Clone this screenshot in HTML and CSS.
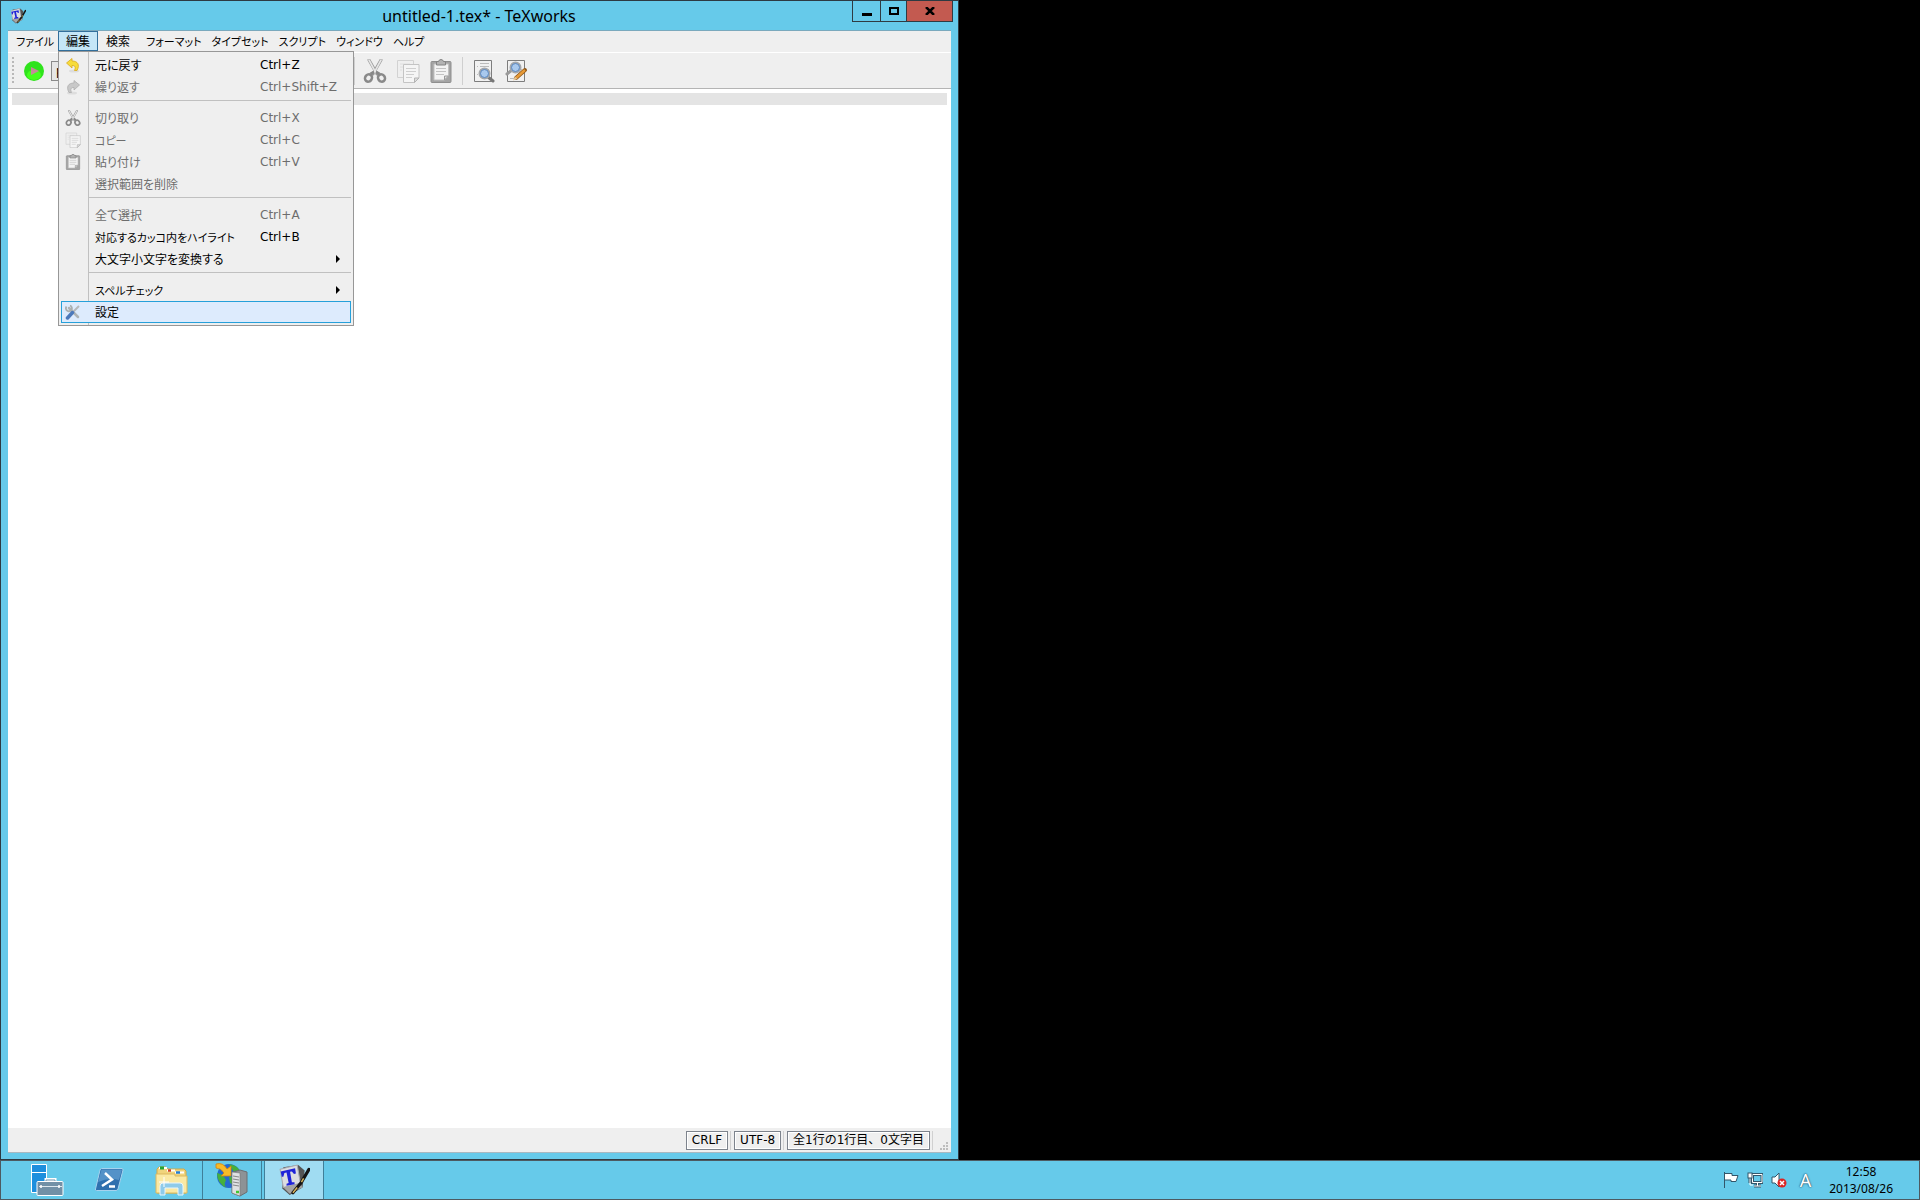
FILE: index.html
```html
<!DOCTYPE html>
<html lang="ja">
<head>
    <meta charset="UTF-8">
    <title>untitled-1.tex* - TeXworks</title>
    <link rel="stylesheet" href="styles.css">
</head>
<body>

    <!-- icons that are used more than once -->
    <svg class="defs" width="0" height="0">
        <symbol id="cut" viewBox="0 0 24 24">
            <path d="M6 1 L14 15 M18 1 L10 15" stroke="#9a9a9a" stroke-width="3" stroke-linecap="round"/>
            <path d="M6 1 L13 14 M18 1 L11 14" stroke="#e6e6e6" stroke-width="1.6" stroke-linecap="round"/>
            <path d="M11 13 L7.500 15 M13 13 L16.500 15" stroke="#888" stroke-width="3"/>
            <ellipse cx="5.500" cy="19" rx="3.300" ry="3.800" fill="none" stroke="#898989" stroke-width="2.600" transform="rotate(35 5.500 19)"/>
            <ellipse cx="18.500" cy="19" rx="3.300" ry="3.800" fill="none" stroke="#898989" stroke-width="2.600" transform="rotate(-35 18.500 19)"/>
        </symbol>
        <symbol id="copy" viewBox="0 0 24 24">
            <path d="M1.500 1.500 H17.500 V18.500 H1.500 Z" fill="#efefef" stroke="#d2d2d2"/>
            <path d="M4 5 H14 M4 8 H8 M4 11 H6" stroke="#dedede"/>
            <path d="M7.500 5.500 H23 V19 L18.500 23.500 H7.500 Z" fill="#f5f5f5" stroke="#c4c4c4"/>
            <path d="M10 9.500 H20 M10 12.500 H20 M10 15.500 H18 M10 18.500 H16" stroke="#cfcfcf"/>
            <path d="M18.500 23.500 V19 H23 Z" fill="#ddd" stroke="#b4b4b4"/>
        </symbol>
        <symbol id="paste" viewBox="0 0 24 24">
            <rect x="2" y="2.500" width="20" height="21" rx="1" fill="#a4a4a4" stroke="#8f8f8f"/>
            <path d="M5 5 H19.500 V17 L15.500 21 H5 Z" fill="#f3f3f3" stroke="#c0c0c0"/>
            <path d="M7 9.500 H17 M7 12.500 H17 M7 15.500 H15" stroke="#c3c3c3"/>
            <path d="M15.500 21 V17 H19.500 Z" fill="#ddd" stroke="#999"/>
            <path d="M7.500 6 V2.500 H9.500 Q10 .5 12 .5 T14.500 2.500 H16.500 V6 Z" fill="#b3b3b3" stroke="#848484"/>
        </symbol>
        <symbol id="texworks" viewBox="0 0 30 30">
            <path d="M5 3 L19 1 L25 6 L23 22 L11 29 L4 23 Z" fill="#555"/>
            <path d="M2 5 L18 1 L21 18 L5 22 Z" fill="#dcdde1" stroke="#a8abb1"/>
            <path d="M5 22 L21 18 L23 22 L11 28 Z" fill="#a5a5a5"/>
            <path d="M2.500 7 L16 4 L16.800 9 L15 9.300 L13 7 L11.300 7.300 L13 17 L15.500 17 V19 L8 20.500 V18.500 L10 17.800 L8 8 L6 8.500 L5 12 L3.500 12 Z" fill="#2023d8"/>
            <path d="M29 5 L22 17 L14 27" fill="none" stroke="#151515" stroke-width="3" stroke-linecap="round"/>
            <path d="M24 13.500 L22 17 M18 22 L14 27" stroke="#d6b35d" stroke-width="1.400"/>
        </symbol>
    </svg>

    <main class="desktop">
        <section class="window">
            <header class="titlebar">
                <svg class="app-icon"><use href="#texworks"/></svg>
                <h1 class="title">untitled-1.tex* - TeXworks</h1>
                <div class="caption">
                    <button class="cap-btn minimize" aria-label="最小化"><svg width="10" height="10"><path d="M0 7 H10 V10 H0 Z"/></svg></button>
                    <button class="cap-btn maximize" aria-label="最大化"><svg width="10" height="8"><path d="M1 1 H9 V7 H1 Z" fill="none" stroke="#000" stroke-width="2"/></svg></button>
                    <button class="cap-btn close" aria-label="閉じる"><svg width="10" height="8"><path d="M1 0 L9 8 M9 0 L1 8" stroke="#000" stroke-width="2.500"/></svg></button>
                </div>
            </header>

            <div class="client">
                <nav class="menubar">
                    <button class="menu kana file">ファイル</button>
                    <div class="menu-holder">
                        <button class="menu open">編集</button>
                        <div class="dropdown">
                            <button class="item">
                                <svg class="item-icon" viewBox="0 0 16 16"><ellipse cx="9" cy="14" rx="5" ry="1.500" fill="#ddd"/><path d="M1.500 6 L7 1.500 V4 C13 4 15 8 12 13.500 H9.500 C11 10 10 8.500 7 8.500 V11 Z" fill="#f7dc3b" stroke="#d9a91c" stroke-width=".8"/></svg>
                                <span class="label">元に戻す</span><span class="key">Ctrl+Z</span>
                            </button>
                            <button class="item" disabled>
                                <svg class="item-icon" viewBox="0 0 16 16"><ellipse cx="7" cy="14" rx="5" ry="1.500" fill="#ddd"/><path d="M14.500 6 L9 1.500 V4 C3 4 1 8 4 13.500 H6.500 C5 10 6 8.500 9 8.500 V11 Z" fill="#c8c8c8" stroke="#adadad" stroke-width=".8"/></svg>
                                <span class="label">繰り返す</span><span class="key">Ctrl+Shift+Z</span>
                            </button>
                            <hr class="line">
                            <button class="item" disabled><svg class="item-icon"><use href="#cut"/></svg><span class="label">切り取り</span><span class="key">Ctrl+X</span></button>
                            <button class="item" disabled><svg class="item-icon"><use href="#copy"/></svg><span class="label small">コピー</span><span class="key">Ctrl+C</span></button>
                            <button class="item" disabled><svg class="item-icon"><use href="#paste"/></svg><span class="label">貼り付け</span><span class="key">Ctrl+V</span></button>
                            <button class="item" disabled><span class="item-icon"></span><span class="label">選択範囲を削除</span></button>
                            <hr class="line">
                            <button class="item" disabled><span class="item-icon"></span><span class="label">全て選択</span><span class="key">Ctrl+A</span></button>
                            <button class="item"><span class="item-icon"></span><span class="label small">対応するカッコ内をハイライト</span><span class="key">Ctrl+B</span></button>
                            <button class="item"><span class="item-icon"></span><span class="label">大文字小文字を変換する</span><svg class="arrow" width="4" height="8"><path d="M0 0 L4 4 L0 8 Z"/></svg></button>
                            <hr class="line">
                            <button class="item"><span class="item-icon"></span><span class="label small">スペルチェック</span><svg class="arrow" width="4" height="8"><path d="M0 0 L4 4 L0 8 Z"/></svg></button>
                            <button class="item selected">
                                <svg class="item-icon" viewBox="0 0 16 16"><path d="M4 4 L13 13" stroke="#aeb3b5" stroke-width="2.500" stroke-linecap="round"/><path d="M1.500 2.500 A3 3 0 1 0 5 1.500" fill="none" stroke="#a9aeae" stroke-width="1.800"/><path d="M14 2 L7 9" stroke="#b4b8ba" stroke-width="2"/><path d="M7.500 8.500 L2.500 14" stroke="#4c79bb" stroke-width="3.500" stroke-linecap="round"/></svg>
                                <span class="label">設定</span>
                            </button>
                        </div>
                    </div>
                    <button class="menu">検索</button>
                    <button class="menu kana">フォーマット</button>
                    <button class="menu kana">タイプセット</button>
                    <button class="menu kana">スクリプト</button>
                    <button class="menu kana">ウィンドウ</button>
                    <button class="menu kana">ヘルプ</button>
                </nav>

                <div class="toolbar">
                    <span class="grip"></span>
                    <button class="tool run" aria-label="タイプセット"><svg viewBox="0 0 24 24"><circle cx="12" cy="12" r="10" fill="#2fe31c"/><ellipse cx="12" cy="16" rx="7" ry="5" fill="#44ff1c"/><path d="M9 8 L17 12 L9 16 Z" fill="#c48a98"/></svg></button>
                    <select class="engine" aria-label="エンジン"><option>pdfLaTeX</option></select>
                    <span class="sep"></span>
                    <button class="tool" aria-label="切り取り" disabled><svg><use href="#cut"/></svg></button>
                    <button class="tool" aria-label="コピー" disabled><svg><use href="#copy"/></svg></button>
                    <button class="tool" aria-label="貼り付け" disabled><svg><use href="#paste"/></svg></button>
                    <span class="sep"></span>
                    <button class="tool" aria-label="検索">
                        <svg viewBox="0 0 24 24"><path d="M3.500 1.500 H20.500 V22.500 H3.500 Z" fill="#f1f1f1" stroke="#7d7d7d"/><path d="M9 4.500 H18 M9 7.500 H18 M9 10.500 H18 M6 7.500 H7 M6 15.500 H7" stroke="#bbb"/><path d="M17 18 L22 22" stroke="#777" stroke-width="3" stroke-linecap="round"/><circle cx="13.500" cy="14.500" r="5" fill="#a9c9ee" stroke="#a4a7ab" stroke-width="2"/><circle cx="13.500" cy="14.500" r="4" fill="none" stroke="#5b88c2"/></svg>
                    </button>
                    <button class="tool" aria-label="置換">
                        <svg viewBox="0 0 24 24"><path d="M3.500 1.500 H20.500 V22.500 H3.500 Z" fill="#f1f1f1" stroke="#7d7d7d"/><path d="M13 10.500 H18 M6 19.500 H14" stroke="#bbb"/><path d="M3 15 L8 11" stroke="#999" stroke-width="3" stroke-linecap="round"/><circle cx="11.500" cy="8.500" r="5" fill="#a9c9ee" stroke="#a4a7ab" stroke-width="2"/><circle cx="11.500" cy="8.500" r="4" fill="none" stroke="#5b88c2"/><path d="M21 11 L12 19" stroke="#8d5415" stroke-width="4" stroke-linecap="round"/><path d="M21 11 L12 19" stroke="#e79a37" stroke-width="2.500"/><path d="M13.500 20 L9 21.500 L11 17.500 Z" fill="#e8c795"/></svg>
                    </button>
                </div>

                <div class="editor">
                    <textarea class="text" rows="1" aria-label="エディタ"></textarea>
                </div>

                <footer class="statusbar">
                    <button class="status">CRLF</button>
                    <button class="status">UTF-8</button>
                    <span class="status">全1行の1行目、0文字目</span>
                    <svg class="resize" width="9" height="9"><path d="M6 0 h2 v2 h-2 Z M3 3 h2 v2 h-2 Z M6 3 h2 v2 h-2 Z M0 6 h2 v2 h-2 Z M3 6 h2 v2 h-2 Z M6 6 h2 v2 h-2 Z" fill="#bdbdbd"/></svg>
                </footer>
            </div>
        </section>
    </main>

    <footer class="taskbar">
        <button class="task" aria-label="サーバー マネージャー">
            <svg viewBox="0 0 36 36"><path d="M2.500 2.500 H17.500 V30.500 H2.500 Z" fill="#1d8fdd" stroke="#fff"/><path d="M2 10.500 H18" stroke="#fff"/><path d="M17 20 V17.500 H26 V20" fill="none" stroke="#fff" stroke-width="3"/><path d="M17 20 V18 H26 V20" fill="none" stroke="#6f92ab"/><rect x="8" y="19.500" width="26" height="14" rx="1" fill="#7190a6" stroke="#fff"/><path d="M10 24.500 H33" stroke="#dce7ee"/><path d="M12 23 V26 M30 23 V26" stroke="#fff" stroke-width="1.500"/></svg>
        </button>
        <button class="task" aria-label="PowerShell">
            <svg viewBox="0 0 36 36"><path d="M10.500 6.500 H31 Q32 6.500 32 8 L27 27 Q26.500 28.500 25 28.500 H5.500 Q4 28.500 4.500 27 L9 8 Q9.500 6.500 10.500 6.500 Z" fill="#2f70ae" stroke="#a6d2ee"/><path d="M10.500 7.500 H31 L28 18 Q18 15 7 20 Z" fill="#69a5d5" opacity=".65"/><path d="M14 11 L21 17.500 L11 24" fill="none" stroke="#fff" stroke-width="2.500"/><path d="M18 24.500 H24" stroke="#fff" stroke-width="2.500"/></svg>
        </button>
        <button class="task" aria-label="エクスプローラー">
            <svg viewBox="0 0 36 36"><path d="M4 31 V7 L6 5 H13 L15 7 H31 L33 9 V31 Z" fill="#f0d47c" stroke="#cfaa4b"/><path d="M6 6 H14 M14 8.500 H22 M22 10.500 H31" stroke="#fff" stroke-width="2"/><path d="M7 6 H11" stroke="#25a536" stroke-width="3"/><path d="M15 8.500 H18" stroke="#d1402a" stroke-width="2.500"/><path d="M23 10.500 H27" stroke="#277fd2" stroke-width="2.500"/><path d="M3 12 H22 V14 H34 V31 H3 Z" fill="#fae9a4" stroke="#dcb95f"/><path d="M7 33 V24 Q7 21 10 21 H27 Q30 21 30 24 V33 H25 V26 H12 V33 Z" fill="#8fcbea" stroke="#e7f6fd"/><path d="M11 15 V25 M6 20 H16" stroke="#fff"/></svg>
        </button>
        <button class="task running" aria-label="リモート デスクトップ">
            <svg viewBox="0 0 36 36"><circle cx="15" cy="14" r="12" fill="#246ad0"/><path d="M3 11 L9 13 L12 18 Q9 24 13 26 Q3 22 3 11 Z M15 2 Q24 3 27 11 L21 12 L18 7 Z M15 15 L23 14 L20 23 L16 21 Z" fill="#45b03d"/><path d="M2 2 Q9 0 13 7 L17 4 V14 H7 L10 11 Q7 6 2 6 Z" fill="#f8bb28" stroke="#d7820c" stroke-width=".8"/><path d="M19 10 L26 8 L33 10 V30 L26 34 L18 31 Z" fill="#8d9295" stroke="#6b6e70"/><path d="M18 10 L26 11 V34 L18 31 Z" fill="#dfe1e3" stroke="#777" stroke-width=".6"/><path d="M19 14 L25 15 M19 17 L25 18 M19 20 L25 21 M19 23 L25 24" stroke="#888"/><path d="M22 30 H25" stroke="#40c832" stroke-width="2.500"/></svg>
        </button>
        <button class="task running active" aria-label="TeXworks"><svg class="tw"><use href="#texworks"/></svg></button>

        <div class="tray">
            <svg width="16" height="16" viewBox="0 0 16 16"><path d="M1.500 0 V16 M2 1.500 H9 V3.500 H15 L13 9.500 H8 V8 H2" fill="#fff" stroke="#33566a"/></svg>
            <svg width="16" height="16" viewBox="0 0 16 16"><path d="M5.500 2.500 H15 V10.500 H5.500 Z M7 14 H14 M10.500 11 V14 M3 6 V11" fill="none" stroke="#33566a" stroke-width="3"/><path d="M5.500 2.500 H15 V10.500 H5.500 Z M7 14 H14 M10.500 11 V14 M3 6 V13 H6" fill="none" stroke="#fff"/><rect x="1" y="1" width="4" height="5" fill="#fff" stroke="#33566a"/></svg>
            <svg width="16" height="16" viewBox="0 0 16 16"><path d="M1 5 H4 L8 1 V15 L4 11 H1 Z" fill="#fff" stroke="#33566a"/><circle cx="11" cy="11" r="4.500" fill="#db2525"/><path d="M9 9 L13 13 M13 9 L9 13" stroke="#fff" stroke-width="1.500"/></svg>
            <span class="ime">A</span>
            <time class="clock">12:58<br>2013/08/26</time>
        </div>
    </footer>

</body>
</html>
```
FILE: styles.css
```css
* {
    box-sizing: border-box;
}

body {
    margin: 0;
    height: 100vh;
    display: flex;
    flex-direction: column;
    background: #000;
    color: #000;
    font: 12px/18px "DejaVu Sans", "Noto Sans CJK JP", sans-serif;
    overflow: hidden;
}

button {
    margin: 0;
    padding: 0;
    border: 0;
    background: none;
    color: inherit;
    font: inherit;
}

.defs {
    position: absolute;
}

.desktop {
    flex: 1;
    display: flex;
    min-height: 0;
}

/* window frame */
.window {
    width: calc(50% - 1px);
    display: flex;
    flex-direction: column;
    padding: 0 7px 6px;
    border: 1px solid #2d3a42;
    background: #66caea;
}

.titlebar {
    height: 30px;
    display: flex;
    align-items: center;
    border-bottom: 1px solid #7aa9bd;
}

.app-icon {
    width: 16px;
    height: 16px;
    margin-left: 2px;
}

.title {
    flex: 1;
    margin: 0;
    padding-left: 80px;
    text-align: center;
    font: 16px/24px "Noto Sans", sans-serif;
}

.caption {
    display: flex;
    align-self: flex-start;
    height: 21px;
    margin-right: -2px;
    border: 1px solid #2f3b42;
    border-top: 0;
}

.cap-btn {
    width: 28px;
    display: flex;
    align-items: center;
    justify-content: center;
    border-right: 1px solid #2f3b42;
}

.maximize {
    width: 26px;
}

.close {
    width: 45px;
    border-right: 0;
    background: #c35a50;
}

.client {
    flex: 1;
    display: flex;
    flex-direction: column;
    background: #efefef;
    min-height: 0;
}

/* menus */
.menubar {
    display: flex;
    height: 22px;
    border-bottom: 1px solid #fff;
    font-family: "Noto Sans CJK JP", sans-serif;
    font-feature-settings: "palt";
}

.menu {
    height: 20px;
    padding: 0 8px;
    text-align: left;
    white-space: nowrap;
}

.kana {
    padding-right: 2px;
    font-size: 11px;
}

.file {
    width: 50px;
}

.menu-holder {
    position: relative;
}

.open {
    width: 40px;
    padding: 0 7px;
    border: 1px solid #336f9b;
    background: #c5e6f7;
}

.dropdown {
    position: absolute;
    z-index: 2;
    top: 20px;
    left: 0;
    width: 296px;
    padding: 2px;
    border: 1px solid #979797;
    background: linear-gradient(90deg, transparent 29px, #c0c0c0 29px, #c0c0c0 30px, transparent 30px) #efefef;
}

.item {
    width: 100%;
    height: 22px;
    display: flex;
    align-items: center;
    padding: 0 10px 0 3px;
    border: 1px solid transparent;
    text-align: left;
    white-space: nowrap;
}

.item:disabled {
    color: #6d6d6d;
}

.item-icon {
    width: 16px;
    height: 16px;
    margin-right: 14px;
}

.label {
    flex: 1;
}

.small {
    font-size: 11px;
}

.key {
    width: 80px;
    font-family: "DejaVu Sans", sans-serif;
}

.selected {
    border-color: #26a0da;
    background: #ddebfd;
}

.line {
    height: 1px;
    margin: 2px 0 6px 27px;
    border: 0;
    background: #c0c0c0;
}

/* toolbar */
.toolbar {
    height: 36px;
    display: flex;
    align-items: center;
    border-bottom: 1px solid #b4b4b4;
}

.grip {
    width: 2px;
    height: 28px;
    margin: 0 8px 0 4px;
    background: repeating-linear-gradient(#b8b8b8 0 2px, transparent 2px 4px);
}

.tool {
    width: 24px;
    height: 24px;
    margin-right: 9px;
}

.tool svg {
    display: block;
    width: 24px;
    height: 24px;
}

.run {
    margin-right: 5px;
}

.engine {
    width: 303px;
    height: 20px;
    border: 1px solid #8a8a8a;
    background: #e6e6e6;
    font: inherit;
}

.sep {
    width: 1px;
    height: 28px;
    margin-right: 8px;
    background: #cfcfcf;
}

.editor {
    flex: 1;
    padding: 4px;
    background: #fff;
}

.text {
    display: block;
    width: 100%;
    height: 12px;
    padding: 0;
    border: 0;
    resize: none;
    background: #e4e4e4;
    font-size: 10px;
    line-height: 12px;
}

.statusbar {
    height: 25px;
    display: flex;
    align-items: center;
    justify-content: flex-end;
    gap: 6px;
    border-bottom: 1px solid #a9b8c0;
}

.status {
    height: 19px;
    padding: 0 5px;
    border: 1px solid #7d838c;
    line-height: 17px;
    box-shadow: inset 0 0 0 1px #fff, 2px 0 0 #efefef, 3px 0 0 #d0d0d0;
}

.resize {
    align-self: flex-end;
    margin: 0 2px 1px 4px;
}

/* taskbar */
.taskbar {
    height: 40px;
    display: flex;
    align-items: stretch;
    padding-left: 15px;
    border: 1px solid #4d5a61;
    background: #66caea;
}

.task {
    width: 62px;
    display: flex;
    align-items: center;
    justify-content: center;
}

.task svg {
    width: 36px;
    height: 36px;
}

.task .tw {
    width: 32px;
    height: 32px;
}

.running {
    width: 60px;
    margin-right: 2px;
    border: 1px solid #3f7f99;
    border-width: 0 1px;
}

.active {
    background: #a0dcf2;
}

.tray {
    display: flex;
    align-items: center;
    gap: 8px;
    margin-left: auto;
    padding-right: 26px;
}

.ime {
    padding: 0 10px 0 5px;
    color: #fff;
    font: 18px/24px "Noto Sans", sans-serif;
    text-shadow: 0 0 1px #1f4a60, 0 0 2px #1f4a60;
}

.clock {
    text-align: center;
    font: 12px/17px "Noto Sans", sans-serif;
}
```
